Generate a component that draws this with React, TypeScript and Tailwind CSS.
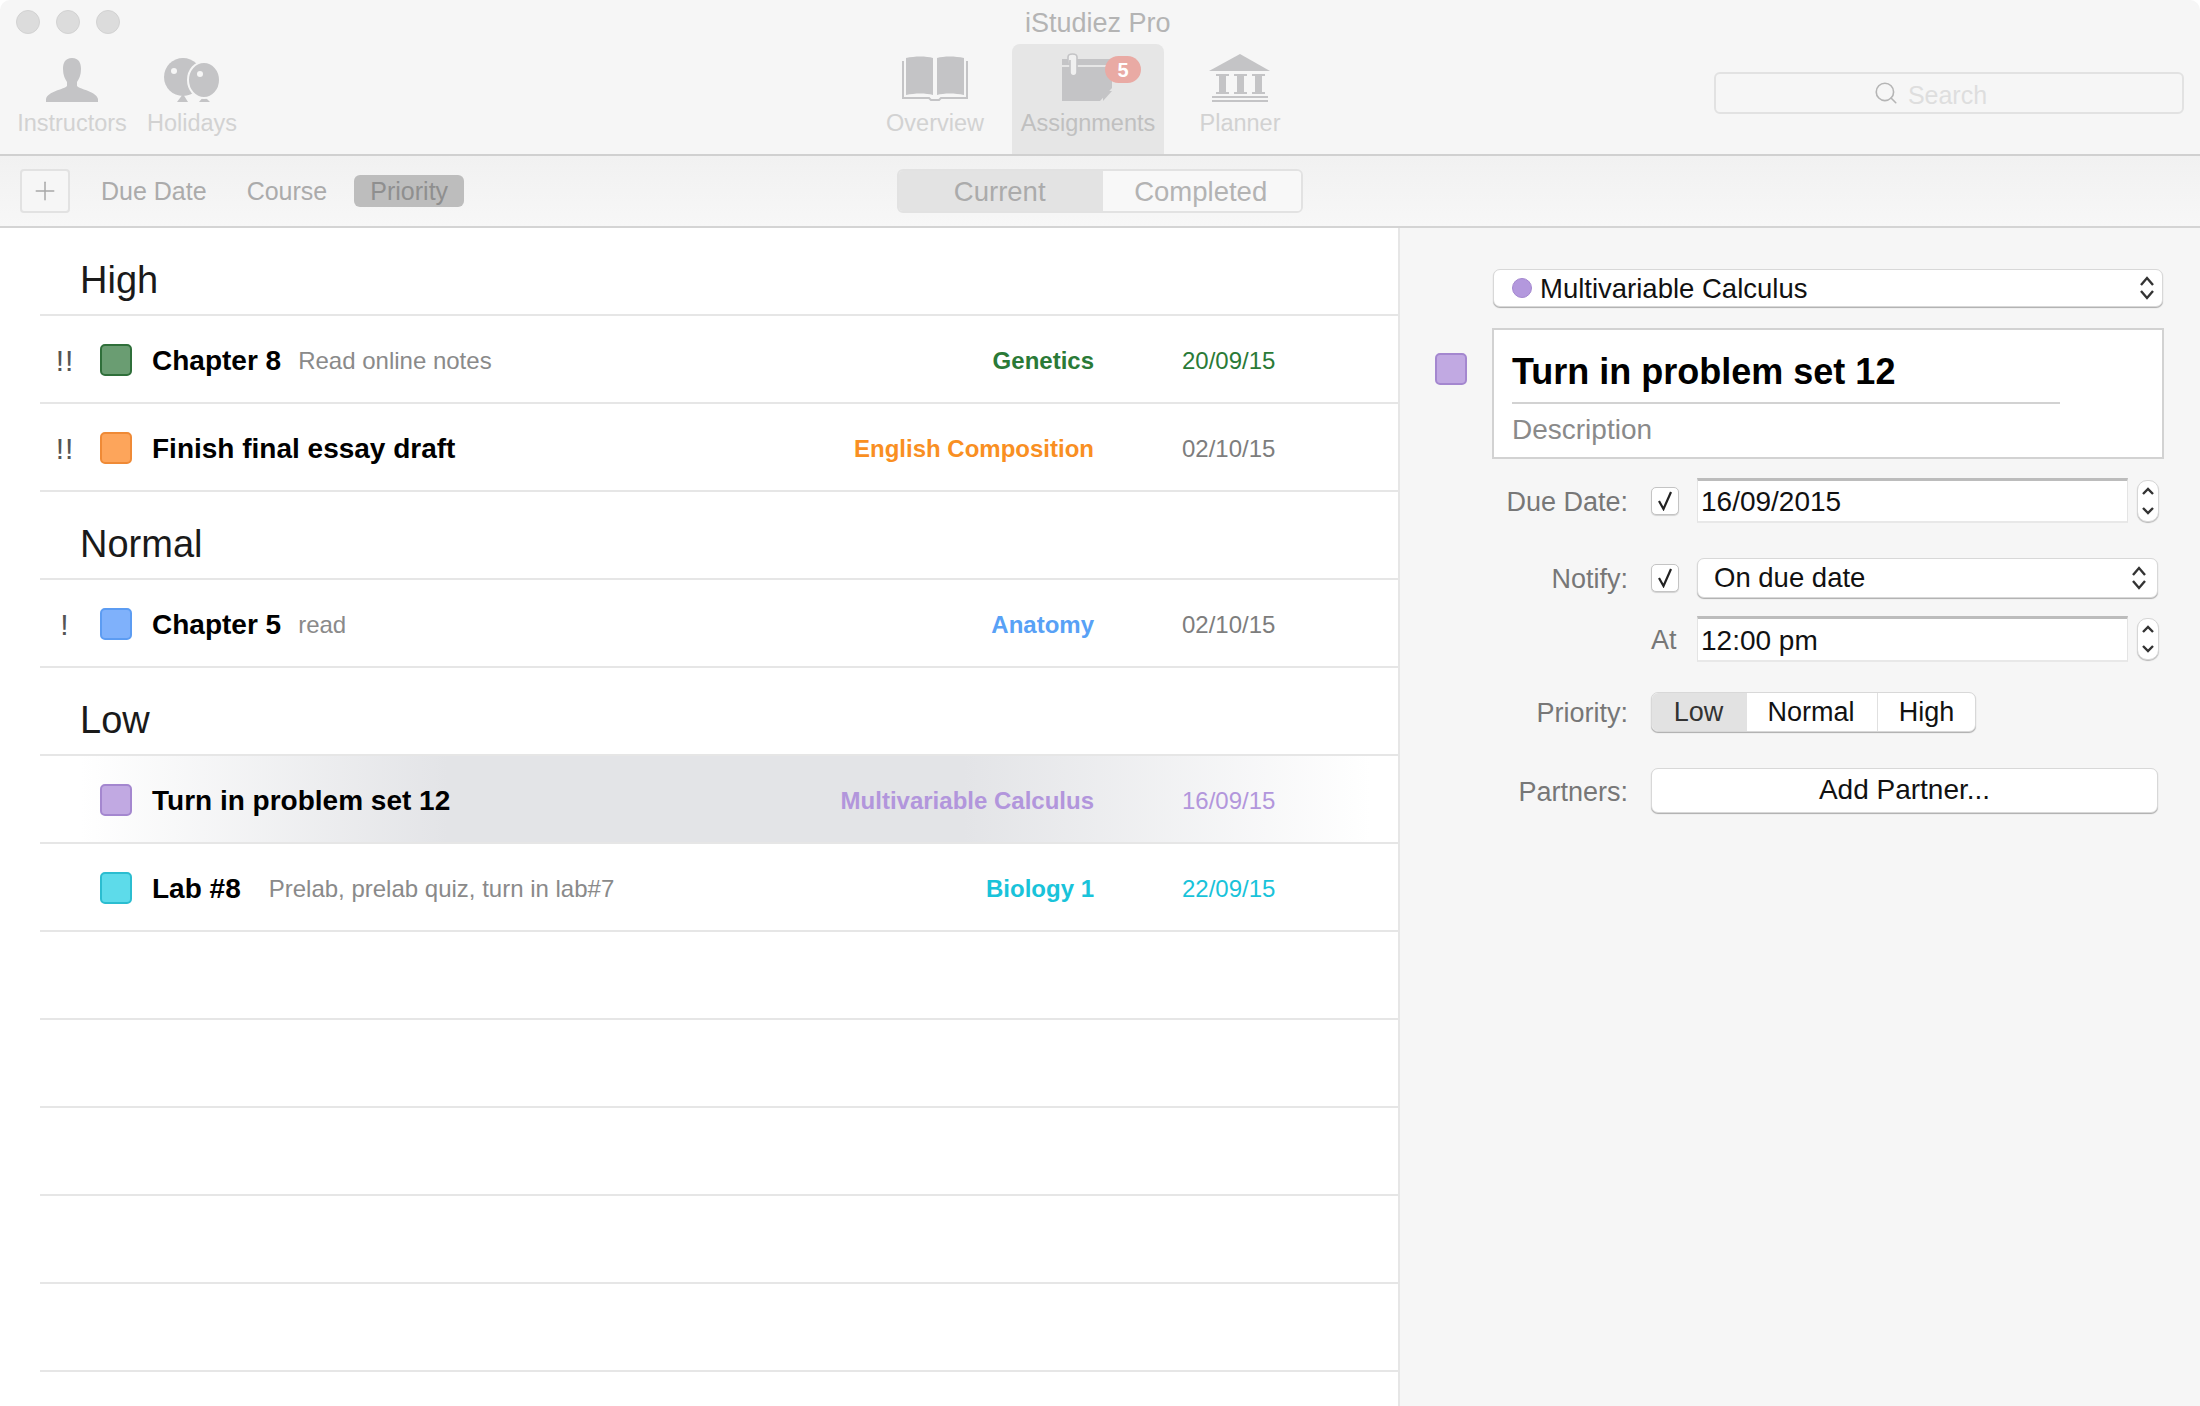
import React from 'react';
import { Plus, Search } from 'lucide-react';

interface Task {
  bang?: string;
  swatch: string;
  title: string;
  note?: string;
  noteGap?: string;
  course: string;
  courseColor: string;
  date: string;
  dateColor: string;
  selected?: boolean;
}

const high: Task[] = [
  {
    bang: '!!',
    swatch: 'bg-[#6a9d72] border-[#2f6f3a]',
    title: 'Chapter 8',
    note: 'Read online notes',
    noteGap: 'ml-[17px]',
    course: 'Genetics',
    courseColor: 'text-[#2a7a37]',
    date: '20/09/15',
    dateColor: 'text-[#2a7a37]',
  },
  {
    bang: '!!',
    swatch: 'bg-[#fda55b] border-[#ef8a36]',
    title: 'Finish final essay draft',
    course: 'English Composition',
    courseColor: 'text-[#f98f22]',
    date: '02/10/15',
    dateColor: 'text-[#7d7d7d]',
  },
];

const normal: Task[] = [
  {
    bang: '!',
    swatch: 'bg-[#7fb1fb] border-[#5c9cf2]',
    title: 'Chapter 5',
    note: 'read',
    noteGap: 'ml-[17px]',
    course: 'Anatomy',
    courseColor: 'text-[#58a1f6]',
    date: '02/10/15',
    dateColor: 'text-[#7d7d7d]',
  },
];

const low: Task[] = [
  {
    swatch: 'bg-[#c1a9e2] border-[#a487cf]',
    title: 'Turn in problem set 12',
    course: 'Multivariable Calculus',
    courseColor: 'text-[#b296dc]',
    date: '16/09/15',
    dateColor: 'text-[#b296dc]',
    selected: true,
  },
  {
    swatch: 'bg-[#5ddbea] border-[#2bbdd0]',
    title: 'Lab #8',
    note: 'Prelab, prelab quiz, turn in lab#7',
    noteGap: 'ml-[28px]',
    course: 'Biology 1',
    courseColor: 'text-[#19c3da]',
    date: '22/09/15',
    dateColor: 'text-[#19c3da]',
  },
];

function PersonIcon() {
  return (
    <svg width="52" height="44" viewBox="0 0 52 44" fill="#c4c4c6">
      <path d="M26 0C33 0 35 5 35 11C35 17 33 21 31 24L31 28C35 32 50 33 52 41L52 44L0 44L0 41C2 33 17 32 21 28L21 24C19 21 17 17 17 11C17 5 19 0 26 0Z" />
    </svg>
  );
}

function BalloonsIcon() {
  return (
    <svg width="56" height="44" viewBox="0 0 56 44" fill="#c4c4c6">
      <ellipse cx="19" cy="19" rx="19" ry="19" />
      <path d="M19 36L13 44L24 44Z" />
      <path d="M40 38L35 44L46 44Z" />
      <ellipse cx="40" cy="22" rx="16" ry="18" stroke="#f6f6f6" strokeWidth="2" />
      <circle cx="10" cy="13" r="3" fill="#f6f6f6" />
      <circle cx="36" cy="16" r="3" fill="#f6f6f6" />
    </svg>
  );
}

function BookIcon() {
  return (
    <svg width="66" height="46" viewBox="0 0 66 46" fill="#c4c4c6">
      <path d="M4 2C13 0 24 0 31 2L31 39C24 37 13 37 4 39Z" />
      <path d="M62 2C53 0 42 0 35 2L35 39C42 37 53 37 62 39Z" />
      <path d="M1 5V42H27L29 44H37L39 42H65V5" fill="none" stroke="#c4c4c6" strokeWidth="2" />
    </svg>
  );
}

function NoteIcon() {
  return (
    <svg width="52" height="50" viewBox="0 0 52 50" fill="#c4c4c6">
      <path d="M0 7H50V13H0Z" />
      <path d="M0 15H50V36L38 49H0Z" />
      <path d="M41 49L50 39H41Z" />
      <path
        d="M6 12V5C6 1 15 1 15 5V20C15 25 8 25 8 20V8"
        fill="#f0f0f0"
        stroke="#c4c4c6"
        strokeWidth="1.6"
      />
    </svg>
  );
}

function TempleIcon() {
  return (
    <svg width="62" height="48" viewBox="0 0 62 48" fill="#c4c4c6">
      <path d="M31 0L61 17H0Z" />
      <path d="M7 20H20V22H17V38H20V40H7V38H10V22H7Z" />
      <path d="M25 20H38V22H35V38H38V40H25V38H28V22H25Z" />
      <path d="M43 20H56V22H53V38H56V40H43V38H46V22H43Z" />
      <path d="M3 42H59V44H3Z" />
      <path d="M3 46H59V48H3Z" />
    </svg>
  );
}

function ToolItem({
  icon,
  label,
  className,
  labelClass,
}: {
  icon: React.ReactNode;
  label: string;
  className: string;
  labelClass?: string;
}) {
  return (
    <div className={`flex flex-col items-center ${className}`}>
      <div className="flex h-[58px] items-end justify-center">{icon}</div>
      <span className={`mt-[7px] text-[23.5px] leading-[28px] ${labelClass ?? 'text-[#d2d2d2]'}`}>
        {label}
      </span>
    </div>
  );
}

function Chevrons({ className }: { className?: string }) {
  return (
    <svg width="16" height="26" viewBox="0 0 16 26" fill="none" stroke="#333" strokeWidth="2.4" className={className}>
      <path d="M2 10L8 3L14 10" />
      <path d="M2 16L8 23L14 16" />
    </svg>
  );
}

function Stepper() {
  return (
    <div className="ml-[9px] flex h-[42px] w-[22px] items-center justify-center rounded-[10px] border border-[#d6d6d6] bg-white shadow-[0_1px_1px_rgba(0,0,0,0.25)]">
      <svg width="14" height="32" viewBox="0 0 14 32" fill="none" stroke="#333" strokeWidth="2.4">
        <path d="M2 9L7 4L12 9" />
        <path d="M2 23L7 28L12 23" />
      </svg>
    </div>
  );
}

function Check() {
  return (
    <div className="flex h-[28px] w-[28px] items-center justify-center rounded-[5px] border border-[#c4c4c4] bg-white shadow-[0_1px_1px_rgba(0,0,0,0.15)]">
      <svg width="18" height="20" viewBox="0 0 18 20" fill="none" stroke="#222" strokeWidth="2.2">
        <path d="M3 10L7.5 18L15 1" />
      </svg>
    </div>
  );
}

function DateField({ value, className }: { value: string; className: string }) {
  return (
    <div className={`flex w-[431px] items-center border-x border-b-2 border-t-[3px] border-x-[#e4e4e4] border-b-[#e8e8e8] border-t-[#bcbcbc] bg-white pt-[2px] pl-[3px] text-[28px] text-[#111] ${className}`}>
      {value}
    </div>
  );
}

function TaskRow({ task }: { task: Task }) {
  return (
    <div
      className={`flex h-[88px] items-center border-b-2 border-[#e6e6e6] pt-[2px] ${
        task.selected ? 'bg-[linear-gradient(90deg,#fff_3%,#e3e4e7_30%,#e3e4e7_68%,#fff_98%)]' : ''
      }`}
    >
      <span className="mt-[1px] w-[50px] text-center text-[30px] tracking-[1px] text-[#555]">{task.bang}</span>
      <span className={`ml-[10px] h-[32px] w-[32px] rounded-[5px] border-2 ${task.swatch}`} />
      <span className="mt-[1px] ml-[20px] text-[28px] font-bold text-black">{task.title}</span>
      {task.note && <span className={`mt-[2px] ${task.noteGap} text-[24px] text-[#8a8a8a]`}>{task.note}</span>}
      <span className={`mt-[2px] ml-auto text-[24px] font-bold ${task.courseColor}`}>{task.course}</span>
      <span className={`mt-[2px] ml-[88px] w-[216px] text-[24px] ${task.dateColor}`}>{task.date}</span>
    </div>
  );
}

function SectionHeader({ label }: { label: string }) {
  return (
    <div className="flex h-[88px] items-end border-b-2 border-[#e6e6e6] pb-[11px] pl-[40px] text-[38px] leading-[46px] text-[#1a1a1a]">
      {label}
    </div>
  );
}

function FormRow({ label, children, className }: { label: string; children: React.ReactNode; className: string }) {
  return (
    <div className={`flex items-center ${className}`}>
      <span className="w-[228px] pt-[3px] text-right text-[27px] text-[#777]">{label}</span>
      <div className="ml-[23px] flex flex-1 items-center">{children}</div>
    </div>
  );
}

export default function App() {
  return (
    <div className="flex h-[1406px] w-[2200px] flex-col overflow-hidden bg-white font-['Liberation_Sans',Arial,sans-serif]">
      {/* Toolbar */}
      <header className="h-[156px] rounded-t-[10px] border-b-2 border-[#d0d0d0] bg-[#f6f6f6]">
        <div className="flex h-[44px] items-center pl-[16px]">
          <div className="flex gap-[16px]">
            <span className="h-[24px] w-[24px] rounded-full border border-[#d2d2d2] bg-[#dcdcdc]" />
            <span className="h-[24px] w-[24px] rounded-full border border-[#d2d2d2] bg-[#dcdcdc]" />
            <span className="h-[24px] w-[24px] rounded-full border border-[#d2d2d2] bg-[#dcdcdc]" />
          </div>
          <span className="mt-[2px] ml-[905px] text-[27px] text-[#b4b4b4]">iStudiez Pro</span>
        </div>
        <div className="flex h-[110px]">
          <ToolItem icon={<PersonIcon />} label="Instructors" className="w-[144px]" />
          <ToolItem icon={<BalloonsIcon />} label="Holidays" className="ml-[1px] w-[94px]" />
          <ToolItem icon={<BookIcon />} label="Overview" className="ml-[619px] w-[154px]" />
          <div className="relative w-[152px] rounded-t-[8px] bg-[#e6e6e6]">
            <ToolItem icon={<NoteIcon />} label="Assignments" className="w-full" labelClass="text-[#c0c0c0]" />
            <span className="absolute top-[12px] left-[93px] flex h-[27px] w-[36px] items-center justify-center rounded-full bg-[#e9aaa4] text-[20px] font-bold text-white">
              5
            </span>
          </div>
          <ToolItem icon={<TempleIcon />} label="Planner" className="w-[152px]" />
          <div className="mt-[28px] ml-[398px] flex h-[42px] w-[470px] items-center justify-center gap-[9px] rounded-[6px] border-2 border-[#e2e2e2] pr-[38px]">
            <Search size={26} strokeWidth={1.5} className="text-[#b5b5b5]" />
            <span className="pt-[5px] text-[25px] text-[#dedede]">Search</span>
          </div>
        </div>
      </header>

      {/* Filter bar */}
      <div className="flex h-[72px] shrink-0 items-center border-b-2 border-[#d4d4d4] bg-gradient-to-b from-[#f1f1f1] to-[#f7f7f7] pl-[20px]">
        <div className="flex h-[44px] w-[50px] items-center justify-center rounded-[4px] border-2 border-[#e2e2e2] bg-[#f6f6f6]">
          <Plus size={30} strokeWidth={1.2} className="text-[#a8a8a8]" />
        </div>
        <span className="ml-[31px] pt-[2px] text-[25px] text-[#ababab]">Due Date</span>
        <span className="ml-[40px] pt-[2px] text-[25px] text-[#ababab]">Course</span>
        <span className="ml-[27px] flex h-[32px] w-[110px] items-center justify-center rounded-[6px] bg-[#bdbdbd] pt-[2px] text-[25px] text-[#8f8f8f]">
          Priority
        </span>
        <div className="ml-[433px] flex h-[44px] w-[406px] overflow-hidden rounded-[6px] border-2 border-[#e2e2e2] text-[27.5px]">
          <span className="flex w-[204px] items-center justify-center bg-[#e3e3e3] pt-[2px] pr-[3px] text-[#ababab]">Current</span>
          <span className="flex flex-1 items-center justify-center bg-[#f8f8f8] pt-[2px] pr-[3px] text-[#b3b3b3]">Completed</span>
        </div>
      </div>

      <div className="flex min-h-0 flex-1">
        {/* Task list */}
        <main className="w-[1400px] shrink-0 border-r-2 border-[#e6e6e6] pl-[40px]">
          <SectionHeader label="High" />
          {high.map((task) => (
            <TaskRow key={task.title} task={task} />
          ))}
          <SectionHeader label="Normal" />
          {normal.map((task) => (
            <TaskRow key={task.title} task={task} />
          ))}
          <SectionHeader label="Low" />
          {low.map((task) => (
            <TaskRow key={task.title} task={task} />
          ))}
          {Array.from({ length: 5 }).map((_, i) => (
            <div key={i} className="h-[88px] border-b-2 border-[#e6e6e6]" />
          ))}
        </main>

        {/* Detail panel */}
        <aside className="flex-1 bg-[#f6f6f6] pt-[41px]">
          <div className="ml-[93px] flex h-[38px] w-[670px] items-center rounded-[7px] border border-[#d8d8d8] bg-white pr-[7px] pl-[18px] text-[27.5px] text-[#111] shadow-[0_1px_1px_rgba(0,0,0,0.3)]">
            <span className="h-[20px] w-[20px] rounded-full border border-[#a487cf] bg-[#b398dd]" />
            <span className="ml-[8px] pt-[2px]">Multivariable Calculus</span>
            <Chevrons className="ml-auto" />
          </div>

          <div className="mt-[21px] flex items-start">
            <span className="mt-[25px] ml-[35px] h-[32px] w-[32px] rounded-[5px] border-2 border-[#a487cf] bg-[#c1a9e2]" />
            <div className="ml-[25px] h-[131px] w-[672px] border-2 border-[#d2d2d2] bg-white pt-[20px] pl-[18px]">
              <div className="h-[54px] w-[548px] border-b-2 border-[#d2d2d2] text-[36px] leading-[44px] font-bold text-black">
                Turn in problem set 12
              </div>
              <div className="mt-[5px] text-[28px] text-[#8a8a8a]">Description</div>
            </div>
          </div>

          <FormRow label="Due Date:" className="mt-[19px] h-[45px]">
            <Check />
            <DateField value="16/09/2015" className="ml-[18px] h-[45px]" />
            <Stepper />
          </FormRow>

          <FormRow label="Notify:" className="mt-[35px] h-[40px]">
            <Check />
            <div className="ml-[18px] flex h-[40px] w-[461px] items-center rounded-[7px] border border-[#d8d8d8] bg-white pr-[10px] pl-[16px] text-[27.5px] text-[#111] shadow-[0_1px_1px_rgba(0,0,0,0.3)]">
              On due date
              <Chevrons className="ml-auto" />
            </div>
          </FormRow>

          <FormRow label="" className="mt-[18px] h-[46px]">
            <span className="w-[46px] pt-[3px] text-[27px] text-[#777]">At</span>
            <DateField value="12:00 pm" className="h-[46px]" />
            <Stepper />
          </FormRow>

          <FormRow label="Priority:" className="mt-[30px] h-[40px]">
            <div className="flex h-[40px] w-[325px] overflow-hidden rounded-[7px] border border-[#d8d8d8] bg-white text-[27px] text-[#111] shadow-[0_1px_1px_rgba(0,0,0,0.3)]">
              <span className="flex w-[95px] items-center justify-center bg-[#e2e2e2] pr-[2px] text-[#333]">Low</span>
              <span className="flex w-[131px] items-center justify-center border-r border-[#e0e0e0] pr-[2px]">Normal</span>
              <span className="flex flex-1 items-center justify-center">High</span>
            </div>
          </FormRow>

          <FormRow label="Partners:" className="mt-[36px] h-[45px]">
            <div className="flex h-[45px] w-[507px] items-center justify-center rounded-[7px] border border-[#d8d8d8] bg-white pb-[1px] text-[28px] text-[#111] shadow-[0_1px_1px_rgba(0,0,0,0.3)]">
              Add Partner...
            </div>
          </FormRow>
        </aside>
      </div>
    </div>
  );
}
